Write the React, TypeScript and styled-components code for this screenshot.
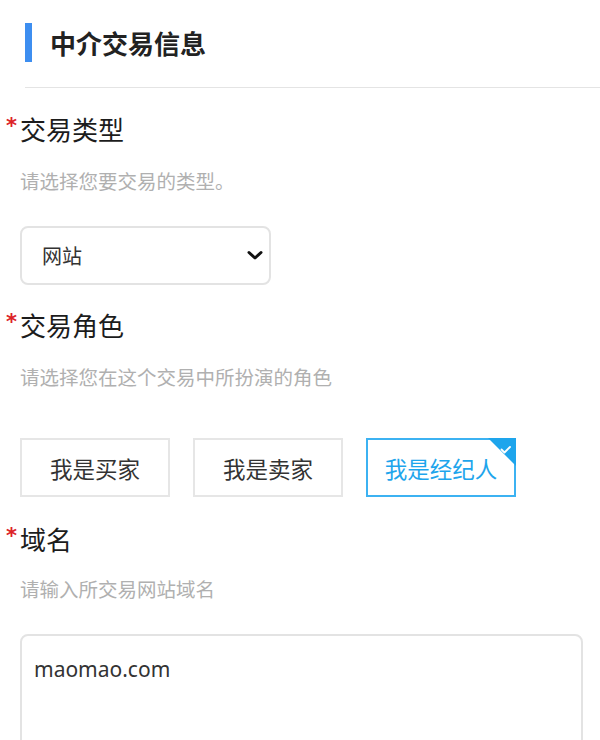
import React from "react";
import styled, { createGlobalStyle } from "styled-components";

const Global = createGlobalStyle`
  html, body { margin: 0; padding: 0; overflow: hidden; background: #fff; }
  body { font-family: "Noto Sans", "Noto Sans CJK SC", sans-serif; }
  * { box-sizing: border-box; }
`;

const Page = styled.div`
  width: 600px;
  height: 740px;
  overflow: hidden;
`;

const Header = styled.div`
  display: flex;
  align-items: center;
  height: 39px;
  margin: 23px 0 0 25px;
`;

const Bar = styled.div`
  width: 7px;
  height: 39px;
  background: #3d8ef0;
`;

const Title = styled.h2`
  margin: 0 0 0 18px;
  font-size: 26px;
  line-height: 39px;
  font-weight: 700;
  color: #222;
  font-family: "Noto Sans CJK SC", sans-serif;
`;

const Divider = styled.div`
  height: 1px;
  margin: 25px 0 0 25px;
  background: #e4e4e4;
`;

const Form = styled.form`
  padding-left: 20px;
`;

const Field = styled.div<{ $top: number }>`
  margin-top: ${(p) => p.$top}px;
`;

const LabelRow = styled.div`
  display: flex;
  align-items: flex-start;
  margin-left: -15px;
  height: 36px;
`;

const Star = styled.span`
  width: 15px;
  padding-left: 1px;
  color: #dc2328;
  font-size: 21px;
  line-height: 30px;
  font-family: "DejaVu Sans", sans-serif;
  font-weight: 700;
`;

const Label = styled.label`
  font-size: 26px;
  line-height: 36px;
  color: #1c1c1c;
  font-family: "Noto Sans CJK SC", sans-serif;
`;

const Hint = styled.p<{ $gap: number }>`
  margin: ${(p) => p.$gap}px 0 0;
  font-size: 19.5px;
  line-height: 28px;
  color: #b0b0b0;
  font-family: "Noto Sans CJK SC", sans-serif;
`;

const Control = styled.div<{ $gap: number }>`
  margin-top: ${(p) => p.$gap}px;
`;

const SelectWrap = styled.div`
  position: relative;
  width: 251px;
  height: 59px;
`;

const Select = styled.select`
  appearance: none;
  width: 100%;
  height: 100%;
  border: 2px solid #e3e3e3;
  border-radius: 8px;
  background: #fff;
  padding: 0 40px 0 20px;
  font-size: 20px;
  color: #333;
  font-family: "Noto Sans CJK SC", sans-serif;
  outline: none;
`;

const Chevron = styled.svg`
  position: absolute;
  right: 8px;
  top: 24px;
  pointer-events: none;
`;

const RoleGroup = styled.div`
  display: flex;
  gap: 23px;
`;

const RoleButton = styled.button<{ $active?: boolean }>`
  position: relative;
  width: 150px;
  height: 59px;
  padding: 0;
  background: #fff;
  border: 2px solid ${(p) => (p.$active ? "#3cb2f2" : "#e6e6e6")};
  color: ${(p) => (p.$active ? "#1ea5ec" : "#333")};
  font-size: 22.5px;
  font-family: "Noto Sans CJK SC", sans-serif;
  cursor: pointer;
`;

const Corner = styled.svg`
  position: absolute;
  top: -2px;
  right: -2px;
`;

const TextArea = styled.textarea`
  display: block;
  width: 563px;
  height: 150px;
  border: 2px solid #e3e3e3;
  border-radius: 8px;
  padding: 18px 12px;
  font-size: 21px;
  line-height: 30px;
  color: #333;
  font-family: "Noto Sans", "Noto Sans CJK SC", sans-serif;
  resize: none;
  outline: none;
`;

const roles = ["我是买家", "我是卖家", "我是经纪人"];

export default function App() {
  return (
    <Page>
      <Global />
      <Header>
        <Bar />
        <Title>中介交易信息</Title>
      </Header>
      <Divider />
      <Form>
        <Field $top={23}>
          <LabelRow>
            <Star>*</Star>
            <Label>交易类型</Label>
          </LabelRow>
          <Hint $gap={20}>请选择您要交易的类型。</Hint>
          <Control $gap={31}>
            <SelectWrap>
              <Select defaultValue="网站">
                <option>网站</option>
                <option>APP</option>
              </Select>
              <Chevron width="16" height="11" viewBox="0 0 16 11">
                <path d="M2 2.5 L8 8 L14 2.5" fill="none" stroke="#111" strokeWidth="3" strokeLinecap="round" strokeLinejoin="round" />
              </Chevron>
            </SelectWrap>
          </Control>
        </Field>
        <Field $top={22}>
          <LabelRow>
            <Star>*</Star>
            <Label>交易角色</Label>
          </LabelRow>
          <Hint $gap={20}>请选择您在这个交易中所扮演的角色</Hint>
          <Control $gap={47}>
            <RoleGroup>
              {roles.map((r, i) => (
                <RoleButton type="button" key={r} $active={i === 2}>
                  {r}
                  {i === 2 && (
                    <Corner width="28" height="28" viewBox="0 0 28 28">
                      <polygon points="0,0 28,0 28,28" fill="#1ea5ec" />
                      <path d="M13.5 11.5 L16.5 14.5 L22 9" fill="none" stroke="#fff" strokeWidth="1.8" strokeLinecap="round" strokeLinejoin="round" />
                    </Corner>
                  )}
                </RoleButton>
              ))}
            </RoleGroup>
          </Control>
        </Field>
        <Field $top={24}>
          <LabelRow>
            <Star>*</Star>
            <Label>域名</Label>
          </LabelRow>
          <Hint $gap={18}>请输入所交易网站域名</Hint>
          <Control $gap={31}>
            <TextArea defaultValue="maomao.com" />
          </Control>
        </Field>
      </Form>
    </Page>
  );
}
